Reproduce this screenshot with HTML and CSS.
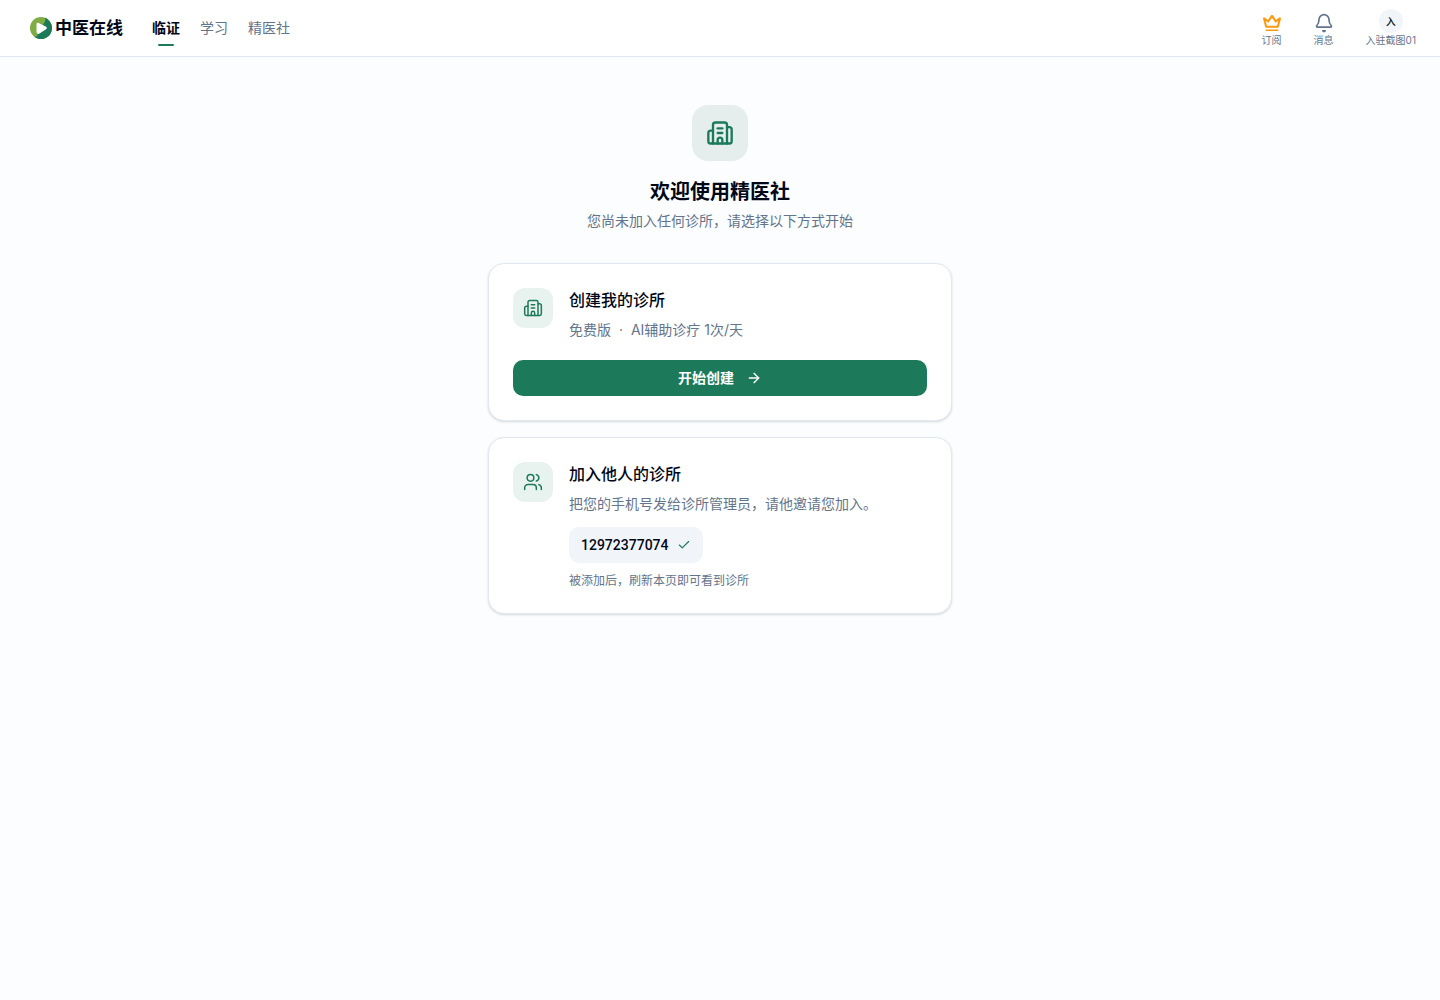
FILE: index.html
```html
<!DOCTYPE html>
<html lang="zh-CN">
<head>
  <meta charset="UTF-8">
  <meta name="viewport" content="width=device-width, initial-scale=1.0">
  <title>中医在线</title>
  <link rel="stylesheet" href="styles.css">
</head>
<body>
  <header class="header">
    <a class="logo" href="#">
      <svg class="logo-mark" viewBox="0 0 22 22" aria-hidden="true">
        <circle cx="11" cy="11" r="11" fill="#7fac45"/>
        <path d="M15 0.8A11 11 0 1 1 4 19.5C6 20 8 19 8 17L14 6C15.500 4 15.500 2 15 0.800Z" fill="#1c7a5a"/>
        <path d="M8 6.200L16 10.200Q17 11 16 11.800L9 16.300Q7.200 17 7 15V7Q7 5.700 8 6.200Z" fill="#fff" stroke="#fff" stroke-linejoin="round"/>
      </svg>
      <span>中医在线</span>
    </a>
    <nav class="nav">
      <a class="nav-link active" href="#">临证</a>
      <a class="nav-link" href="#">学习</a>
      <a class="nav-link" href="#">精医社</a>
    </nav>
    <div class="actions">
      <a class="action" href="#">
        <svg class="icon crown" viewBox="0 0 24 24" aria-hidden="true">
          <path d="M2.500 6.500 5 16.500h14l2.500-10-5 3.500L12 3.500 7.500 10z" stroke-width="2.500"/>
          <path d="M5 20.800h14" stroke-width="1.800"/>
        </svg>
        <span>订阅</span>
      </a>
      <a class="action" href="#">
        <svg class="icon" viewBox="0 0 24 24" aria-hidden="true">
          <path d="M10.500 21.300h3l-1.500 1z"/>
          <path d="M3.262 15.326A1 1 0 0 0 4 17h16a1 1 0 0 0 .740-1.673C19.410 13.956 18 12.499 18 8A6 6 0 0 0 6 8c0 4.499-1.411 5.956-2.738 7.326"/>
        </svg>
        <span>消息</span>
      </a>
      <a class="action" href="#">
        <span class="avatar">入</span>
        <span>入驻截图01</span>
      </a>
    </div>
  </header>

  <main class="container">
    <!-- Welcome -->
    <section class="welcome">
      <div class="badge badge-large">
        <svg class="icon" viewBox="0 0 24 24" aria-hidden="true">
          <path d="M10 12h4"/>
          <path d="M10 8h4"/>
          <path d="M14 21v-3a2 2 0 0 0-4 0v3"/>
          <path d="M6 10H4a2 2 0 0 0-2 2v7a2 2 0 0 0 2 2h16a2 2 0 0 0 2-2V9a2 2 0 0 0-2-2h-2"/>
          <path d="M6 21V5a2 2 0 0 1 2-2h8a2 2 0 0 1 2 2v16"/>
        </svg>
      </div>
      <h1>欢迎使用精医社</h1>
      <p>您尚未加入任何诊所，请选择以下方式开始</p>
    </section>

    <!-- Create a clinic -->
    <section class="card">
      <div class="card-row">
        <div class="badge">
          <svg class="icon" viewBox="0 0 24 24" aria-hidden="true">
            <path d="M10 12h4"/>
            <path d="M10 8h4"/>
            <path d="M14 21v-3a2 2 0 0 0-4 0v3"/>
            <path d="M6 10H4a2 2 0 0 0-2 2v7a2 2 0 0 0 2 2h16a2 2 0 0 0 2-2V9a2 2 0 0 0-2-2h-2"/>
            <path d="M6 21V5a2 2 0 0 1 2-2h8a2 2 0 0 1 2 2v16"/>
          </svg>
        </div>
        <div class="card-body">
          <h2>创建我的诊所</h2>
          <p class="desc">免费版 <span class="dot">·</span> AI辅助诊疗 1次/天</p>
        </div>
      </div>
      <button type="button" class="btn">
        开始创建
        <svg class="icon icon-small" viewBox="0 0 24 24" aria-hidden="true">
          <path d="M5 12h14"/>
          <path d="m12 5 7 7-7 7"/>
        </svg>
      </button>
    </section>

    <!-- Join a clinic -->
    <section class="card">
      <div class="card-row">
        <div class="badge">
          <svg class="icon" viewBox="0 0 24 24" aria-hidden="true">
            <path d="M16 21v-2a4 4 0 0 0-4-4H6a4 4 0 0 0-4 4v2"/>
            <circle cx="9" cy="7" r="4"/>
            <path d="M22 21v-2a4 4 0 0 0-3-3.870"/>
            <path d="M16 3.130a4 4 0 0 1 0 7.750"/>
          </svg>
        </div>
        <div class="card-body">
          <h2>加入他人的诊所</h2>
          <p class="desc">把您的手机号发给诊所管理员，请他邀请您加入。</p>
          <button type="button" class="phone">
            12972377074
            <svg class="icon icon-check" viewBox="0 0 24 24" aria-hidden="true">
              <path d="M20 6 9 17l-5-5"/>
            </svg>
          </button>
          <p class="hint">被添加后，刷新本页即可看到诊所</p>
        </div>
      </div>
    </section>
  </main>
</body>
</html>
```

FILE: styles.css
```css
* {
  box-sizing: border-box;
}
body {
  margin: 0;
  min-height: 100vh;
  font-family: Inter, "Noto Sans CJK SC", sans-serif;
  font-size: 14px;
  line-height: 20px;
  background-color: #fbfdff;
  color: #020817;
}
h1, h2, p {
  margin: 0;
}
a {
  color: inherit;
  text-decoration: none;
}
button {
  border: 0;
  font: inherit;
  color: inherit;
  cursor: pointer;
}
.icon {
  width: 20px;
  height: 20px;
  flex-shrink: 0;
  fill: none;
  stroke: currentColor;
  stroke-width: 2;
  stroke-linecap: round;
  stroke-linejoin: round;
}

/* Header */
.header {
  display: flex;
  align-items: center;
  height: 57px;
  padding: 0 24px 0 30px;
  background: white;
  border-bottom: 1px solid #e2e8f0;
}
.logo {
  display: flex;
  align-items: center;
  gap: 3px;
  font-size: 17px;
  line-height: 24px;
  font-weight: 600;
}
.logo-mark {
  width: 22px;
  height: 22px;
}
.nav {
  display: flex;
  gap: 20px;
  margin-left: 29px;
}
.nav-link {
  position: relative;
  padding: 8px 0;
  color: #64748b;
}
.nav-link.active {
  color: #020817;
  font-weight: 600;
}
.nav-link.active::after {
  content: "";
  position: absolute;
  left: 50%;
  bottom: 0;
  width: 16px;
  height: 2px;
  margin-left: -8px;
  border-radius: 2px;
  background: #1c7a5a;
}
.actions {
  display: flex;
  align-items: flex-end;
  gap: 32px;
  margin-left: auto;
}
.action {
  display: flex;
  flex-direction: column;
  align-items: center;
  font-size: 10px;
  line-height: 14px;
  color: #64748b;
}
.crown {
  color: #f99b11;
}
.avatar {
  display: flex;
  align-items: center;
  justify-content: center;
  width: 24px;
  height: 24px;
  border-radius: 50%;
  background: #f1f5f9;
  color: #020817;
  font-weight: 500;
}

/* Content */
.container {
  max-width: 464px;
  margin: 0 auto;
  padding: 48px 0;
}
.welcome {
  display: flex;
  flex-direction: column;
  align-items: center;
  margin-bottom: 32px;
  text-align: center;
}
.welcome h1 {
  margin: 16px 0 4px;
  font-size: 20px;
  line-height: 30px;
  font-weight: 600;
}
.welcome p {
  color: #64748b;
}
.badge {
  display: flex;
  align-items: center;
  justify-content: center;
  flex-shrink: 0;
  width: 40px;
  height: 40px;
  border-radius: 12px;
  background: #e8f2ee;
  color: #1c7a5a;
}
.badge-large {
  width: 56px;
  height: 56px;
  border-radius: 16px;
  background: #e5eeec;
}
.badge-large .icon {
  width: 28px;
  height: 28px;
}
.badge:not(.badge-large) .icon {
  stroke-width: 1.8;
}
.card {
  padding: 24px;
  margin-bottom: 16px;
  background: white;
  border: 1px solid #e2e8f0;
  border-radius: 16px;
  box-shadow: 0 1px 3px rgba(15, 23, 42, 0.1), 0 1px 2px rgba(15, 23, 42, 0.06);
}
.card-row {
  display: flex;
  gap: 16px;
}
.card-body {
  flex: 1;
}
.card h2 {
  font-size: 16px;
  line-height: 24px;
  font-weight: 500;
}
.desc {
  margin-top: 6px;
  line-height: 23px;
  color: #64748b;
}
.dot {
  margin: 0 4px;
}
.btn {
  display: flex;
  align-items: center;
  justify-content: center;
  gap: 12px;
  width: 100%;
  height: 36px;
  margin-top: 19px;
  border-radius: 10px;
  background: #1c7a5a;
  color: white;
  font-weight: 600;
}
.icon-small {
  width: 16px;
  height: 16px;
}
.phone {
  display: inline-flex;
  align-items: center;
  gap: 8px;
  height: 36px;
  margin-top: 12px;
  padding: 0 12px;
  border-radius: 10px;
  background: #f1f5f9;
  font-family: Roboto, sans-serif;
  font-weight: 500;
  vertical-align: top;
}
.icon-check {
  width: 14px;
  height: 14px;
  color: #1c7a5a;
}
.hint {
  margin-top: 10px;
  font-size: 12px;
  line-height: 16px;
  color: #64748b;
}
```
